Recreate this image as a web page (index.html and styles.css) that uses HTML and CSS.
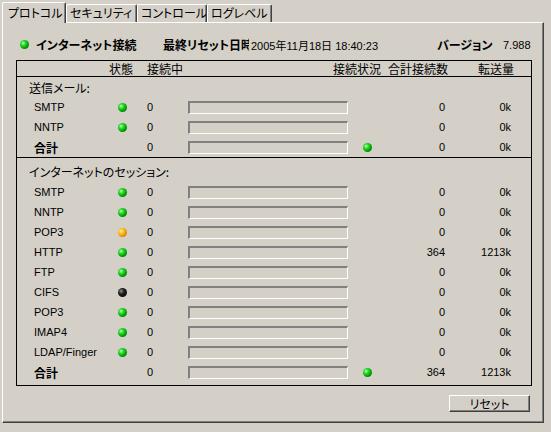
FILE: index.html
```html
<!DOCTYPE html>
<html lang="ja">
<head>
<meta charset="utf-8">
<title>プロトコル</title>
<link rel="stylesheet" href="styles.css">
</head>
<body>
<div class="tabs">
  <div class="tab sel t1">プロトコル</div>
  <div class="tab t2">セキュリティ</div>
  <div class="tab t3">コントロール</div>
  <div class="tab t4">ログレベル</div>
</div>
<div class="panel">
  <div class="info">
    <span class="c"><i class="dot g"></i></span>
    <b class="c">インターネット接続</b>
    <b class="c clip">最終リセット日時</b>
    <span class="c lat">2005年11月18日 18:40:23</span>
    <b class="c">バージョン</b>
    <span class="c lat">7.988</span>
  </div>
  <div class="box">
    <div class="head">
      <span></span><span>状態</span><span>接続中</span><span>接続状況</span><span>合計接続数</span><span>転送量</span>
    </div>
    <div class="sec s1">
      <div class="title">送信メール:</div>
      <div class="row"><span class="lbl">SMTP</span><i class="dot g"></i><span></span><span class="num">0</span><span class="bar"></span><span></span><span></span><span class="r">0</span><span class="r">0k</span></div>
      <div class="row"><span class="lbl">NNTP</span><i class="dot g"></i><span></span><span class="num">0</span><span class="bar"></span><span></span><span></span><span class="r">0</span><span class="r">0k</span></div>
      <div class="row"><span class="lbl tot">合計</span><span></span><span></span><span class="num">0</span><span class="bar"></span><span></span><i class="dot g"></i><span class="r">0</span><span class="r">0k</span></div>
    </div>
    <div class="sec s2">
      <div class="title">インターネットのセッション:</div>
      <div class="row"><span class="lbl">SMTP</span><i class="dot g"></i><span></span><span class="num">0</span><span class="bar"></span><span></span><span></span><span class="r">0</span><span class="r">0k</span></div>
      <div class="row"><span class="lbl">NNTP</span><i class="dot g"></i><span></span><span class="num">0</span><span class="bar"></span><span></span><span></span><span class="r">0</span><span class="r">0k</span></div>
      <div class="row"><span class="lbl">POP3</span><i class="dot o"></i><span></span><span class="num">0</span><span class="bar"></span><span></span><span></span><span class="r">0</span><span class="r">0k</span></div>
      <div class="row"><span class="lbl">HTTP</span><i class="dot g"></i><span></span><span class="num">0</span><span class="bar"></span><span></span><span></span><span class="r">364</span><span class="r">1213k</span></div>
      <div class="row"><span class="lbl">FTP</span><i class="dot g"></i><span></span><span class="num">0</span><span class="bar"></span><span></span><span></span><span class="r">0</span><span class="r">0k</span></div>
      <div class="row"><span class="lbl">CIFS</span><i class="dot k"></i><span></span><span class="num">0</span><span class="bar"></span><span></span><span></span><span class="r">0</span><span class="r">0k</span></div>
      <div class="row"><span class="lbl">POP3</span><i class="dot g"></i><span></span><span class="num">0</span><span class="bar"></span><span></span><span></span><span class="r">0</span><span class="r">0k</span></div>
      <div class="row"><span class="lbl">IMAP4</span><i class="dot g"></i><span></span><span class="num">0</span><span class="bar"></span><span></span><span></span><span class="r">0</span><span class="r">0k</span></div>
      <div class="row"><span class="lbl">LDAP/Finger</span><i class="dot g"></i><span></span><span class="num">0</span><span class="bar"></span><span></span><span></span><span class="r">0</span><span class="r">0k</span></div>
      <div class="row"><span class="lbl tot">合計</span><span></span><span></span><span class="num">0</span><span class="bar"></span><span></span><i class="dot g"></i><span class="r">364</span><span class="r">1213k</span></div>
    </div>
  </div>
  <div class="actions">
    <button class="btn">リセット</button>
  </div>
</div>
</body>
</html>
```
FILE: styles.css
```css
* { box-sizing: border-box; }
html, body {
  margin: 0;
  padding: 0;
  background: #d4d0c8;
}
body {
  width: 551px;
  height: 432px;
  overflow: hidden;
  font-family: "Noto Sans CJK JP", sans-serif;
  font-feature-settings: "palt";
  font-size: 12px;
  color: #000;
}
.tabs {
  display: flex;
  align-items: flex-end;
  height: 22px;
  padding-left: 2px;
}
.tab {
  height: 18px;
  line-height: 16px;
  padding-left: 5px;
  border-top: 1px solid #fff;
  border-left: 1px solid #fff;
  border-right: 1px solid #404040;
  border-radius: 2px 2px 0 0;
  box-shadow: inset -1px 0 #808080;
  white-space: nowrap;
  overflow: hidden;
  background: #d4d0c8;
}
.tab.sel {
  height: 21px;
  line-height: 19px;
  margin-bottom: -1px;
  position: relative;
  z-index: 1;
}
.t1 { width: 64px; }
.t2 { width: 71px; padding-left: 3px; }
.t3 { width: 70px; padding-left: 3px; }
.t4 { width: 65px; padding-left: 3px; }
.panel {
  margin-left: 2px;
  width: 542px;
  height: 401px;
  border-top: 1px solid #fff;
  border-left: 1px solid #fff;
  border-right: 1px solid #404040;
  border-bottom: 1px solid #404040;
  box-shadow: inset -1px -1px #808080;
}
.info {
  display: grid;
  grid-template-columns: 16px 127px 88px 186px 66px auto;
  align-items: center;
  height: 16px;
  margin-top: 13px;
  padding-left: 17px;
  white-space: nowrap;
}
.info b { font-weight: bold; }
.clip { overflow: hidden; width: 86px; }
.lat {
  font-family: "Liberation Sans", "Noto Sans CJK JP", sans-serif;
  font-size: 11px;
}
.dot {
  display: block;
  width: 9px;
  height: 9px;
  border-radius: 50%;
}
.dot.g { background: radial-gradient(circle at 35% 35%, #c8ffc8 0, #30e030 25%, #00a000 60%, #005000 100%); }
.dot.o { background: radial-gradient(circle at 35% 35%, #fff0b0 0, #ffc020 30%, #e09000 65%, #a06000 100%); }
.dot.k { background: radial-gradient(circle at 35% 35%, #909090 0, #202020 35%, #000 100%); }
.box {
  margin: 8px 11px 0 13px;
  border: 1px solid #000;
}
.head {
  display: grid;
  grid-template-columns: 92px 38px 186px 55px 90px auto;
  height: 16px;
  line-height: 15px;
  border-bottom: 1px solid #000;
  white-space: nowrap;
}
.sec.s1 {
  padding-top: 1px;
  border-bottom: 1px solid #000;
}
.sec.s1 .title { height: 19px; line-height: 19px; }
.sec.s2 {
  padding-top: 4px;
  padding-bottom: 3px;
}
.title {
  height: 20px;
  line-height: 20px;
  padding-left: 12px;
}
.row {
  display: grid;
  grid-template-columns: 101px 9px 20px 41px 160px 15px 9px 73px 66px;
  height: 20px;
  align-items: center;
  font-family: "Liberation Sans", "Noto Sans CJK JP", sans-serif;
  font-size: 11px;
  white-space: nowrap;
}
.lbl { padding-left: 17px; }
.lbl.tot {
  font-family: "Noto Sans CJK JP", sans-serif;
  font-size: 12px;
  font-weight: bold;
}
.num { padding-left: 0; }
.r { text-align: right; }
.bar {
  align-self: start;
  margin-top: 4px;
  height: 13px;
  border-top: 2px solid #808080;
  border-left: 2px solid #808080;
  border-right: 1px solid #fff;
  border-bottom: 1px solid #fff;
}
.actions {
  display: flex;
  justify-content: flex-end;
  padding-right: 13px;
  margin-top: 9px;
}
.btn {
  width: 81px;
  height: 17px;
  padding: 0;
  margin: 0;
  font-family: "Noto Sans CJK JP", sans-serif;
  font-feature-settings: "palt";
  font-size: 12px;
  line-height: 14px;
  color: #000;
  background: #d4d0c8;
  border: 1px solid;
  border-color: #fff #404040 #404040 #fff;
  box-shadow: inset -1px -1px #808080;
}
```
